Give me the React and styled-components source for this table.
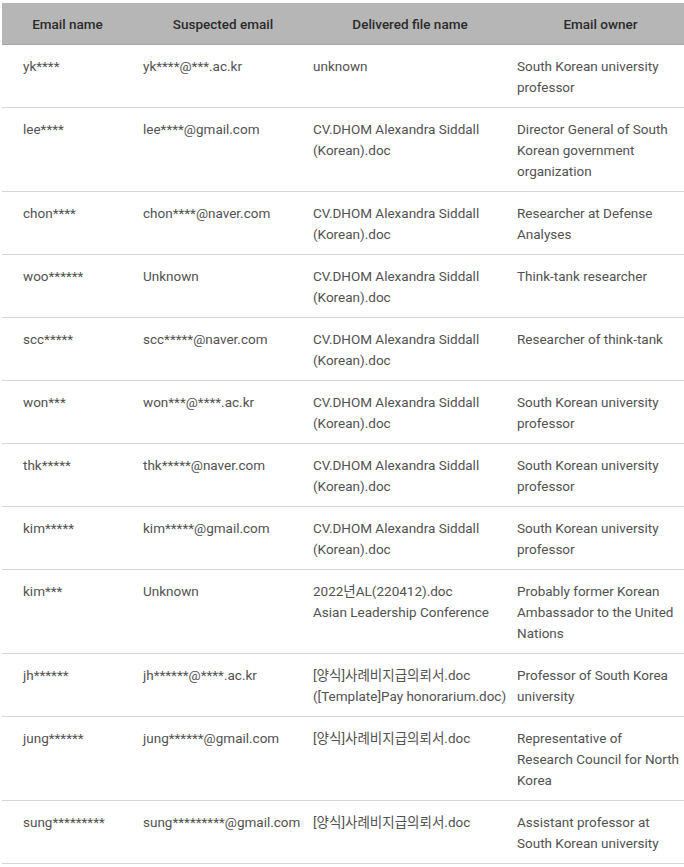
import React from "react";
import styled, { createGlobalStyle } from "styled-components";

const GlobalStyle = createGlobalStyle`
  body {
    margin: 0;
    background: #fff;
    font-family: Roboto, "Noto Sans CJK KR", sans-serif;
  }
`;

const Wrapper = styled.div`
  padding: 3px 0 0 2px;
`;

const Table = styled.table`
  width: 682px;
  border-collapse: collapse;
  table-layout: fixed;
  font-size: 13.5px;
  line-height: 21px;
`;

const HeadRow = styled.tr`
  background: #b6b6b6;
  border-bottom: 1px solid #a9a9a9;
`;

const HeadCell = styled.th`
  box-sizing: border-box;
  height: 41px;
  padding: 2px 10px 0 ${p => (p.$first ? "10px" : "20px")};
  text-align: center;
  font-weight: 500;
  color: #2b2b2b;
  font-size: 13.5px;
`;

const Row = styled.tr`
  border-bottom: 1px solid #d6d6d6;
`;

const Cell = styled.td`
  vertical-align: top;
  padding: 11px 0 9px ${p => (p.$first ? "21px" : "10px")};
  color: #525252;
  font-weight: 400;
`;

const Line = styled.div`
  white-space: nowrap;
`;

const columns = [131, 170, 204, 177];
const headers = ["Email name", "Suspected email", "Delivered file name", "Email owner"];

const cv = ["CV.DHOM Alexandra Siddall", "(Korean).doc"];
const sku = ["South Korean university", "professor"];

const rows = [
  ["yk****", "yk****@***.ac.kr", "unknown", sku],
  ["lee****", "lee****@gmail.com", cv, ["Director General of South", "Korean government", "organization"]],
  ["chon****", "chon****@naver.com", cv, ["Researcher at Defense", "Analyses"]],
  ["woo******", "Unknown", cv, "Think-tank researcher"],
  ["scc*****", "scc*****@naver.com", cv, "Researcher of think-tank"],
  ["won***", "won***@****.ac.kr", cv, sku],
  ["thk*****", "thk*****@naver.com", cv, sku],
  ["kim*****", "kim*****@gmail.com", cv, sku],
  ["kim***", "Unknown", ["2022년AL(220412).doc", "Asian Leadership Conference"], ["Probably former Korean", "Ambassador to the United", "Nations"]],
  ["jh******", "jh******@****.ac.kr", ["[양식]사례비지급의뢰서.doc", "([Template]Pay honorarium.doc)"], ["Professor of South Korea", "university"]],
  ["jung******", "jung******@gmail.com", "[양식]사례비지급의뢰서.doc", ["Representative of", "Research Council for North", "Korea"]],
  ["sung*********", "sung*********@gmail.com", "[양식]사례비지급의뢰서.doc", ["Assistant professor at", "South Korean university"]]
];

const renderContent = value =>
  Array.isArray(value)
    ? value.map((line, i) => <Line key={i}>{line}</Line>)
    : value;

const App = () => {
  return (
    <Wrapper>
      <GlobalStyle />
      <Table>
        <colgroup>
          {columns.map((w, i) => (
            <col key={i} style={{ width: w }} />
          ))}
        </colgroup>
        <thead>
          <HeadRow>
            {headers.map((h, i) => (
              <HeadCell key={h} $first={i === 0}>
                {h}
              </HeadCell>
            ))}
          </HeadRow>
        </thead>
        <tbody>
          {rows.map((row, r) => (
            <Row key={r}>
              {row.map((value, c) => (
                <Cell key={c} $first={c === 0}>
                  {renderContent(value)}
                </Cell>
              ))}
            </Row>
          ))}
        </tbody>
      </Table>
    </Wrapper>
  );
};

export default App;
